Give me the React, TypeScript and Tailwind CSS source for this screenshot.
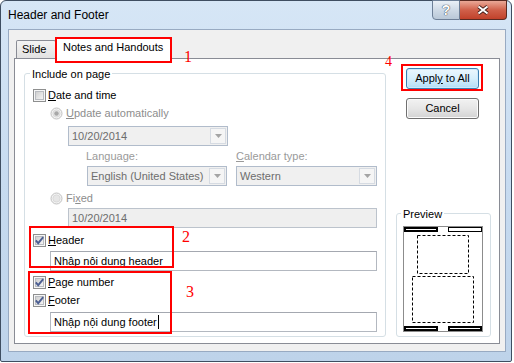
import React from 'react';

// Win7-style check box, 13x13
const CheckBox = ({ checked }: { checked?: boolean }) => (
  <svg width="13" height="13" viewBox="0 0 13 13" className="shrink-0">
    <defs>
      <linearGradient id="cbfill" x1="0" y1="0" x2="1" y2="1">
        <stop offset="0" stopColor="#cdcdcd" />
        <stop offset="1" stopColor="#f7f7f7" />
      </linearGradient>
    </defs>
    <rect x="0.5" y="0.5" width="12" height="12" fill="#f6f6f6" stroke="#8e8f8f" />
    <rect x="2.5" y="2.5" width="8" height="8" fill="url(#cbfill)" stroke="#b9bcc1" />
    {checked && (
      <path d="M2.8 6.4 L5.2 9.2 L10.2 3.2" fill="none" stroke="#4c5f93" strokeWidth="1.9" />
    )}
  </svg>
);

const Radio = ({ selected }: { selected?: boolean }) => (
  <svg width="13" height="13" viewBox="0 0 13 13" className="shrink-0">
    <circle cx="6.5" cy="6.5" r="5.5" fill="#f3f3f3" stroke="#c2c2c2" />
    <circle cx="6.5" cy="6.5" r="3.6" fill="#e6e6e6" stroke="#d6d6d6" strokeWidth="0.8" />
    {selected && <circle cx="6.5" cy="6.5" r="2.2" fill="#a8a8a8" />}
  </svg>
);

const Key = ({ children }: { children: React.ReactNode }) => (
  <span className="underline decoration-1 underline-offset-[1px]">{children}</span>
);

const Combo = ({ value, className = '' }: { value: string; className?: string }) => (
  <div className={`flex h-[20px] border border-[#b1bccb] bg-[#f0f0f0] ${className}`}>
    <span className="flex flex-1 items-center pl-[3px] text-[#6d6d6d]">{value}</span>
    <span className="m-px flex w-[16px] items-center justify-center border border-[#d6dbe2] bg-[#f5f5f5]">
      <svg width="7" height="4" viewBox="0 0 7 4">
        <path d="M0 0h7L3.5 4z" fill="#a4a4a4" />
      </svg>
    </span>
  </div>
);

const PreviewPage = () => (
  <svg width="80" height="106" viewBox="0 0 80 106">
    <rect x="0.5" y="0.5" width="79" height="105" fill="#fff" stroke="#8c8c8c" />
    <rect x="2" y="2" width="32" height="3" fill="#fff" stroke="#000" strokeWidth="2" />
    <rect x="45.5" y="1.5" width="33" height="4" fill="#fff" stroke="#000" />
    <rect x="14.5" y="9.5" width="51" height="38" fill="none" stroke="#000" strokeDasharray="3 2" />
    <rect x="9.5" y="50.5" width="61" height="46" fill="none" stroke="#000" strokeDasharray="3 2" />
    <rect x="2" y="101" width="32" height="3" fill="#fff" stroke="#000" strokeWidth="2" />
    <rect x="46" y="101" width="32" height="3" fill="#fff" stroke="#000" strokeWidth="2" />
  </svg>
);

export default function App() {
  return (
    <div className="relative h-[363px] w-[514px] overflow-hidden bg-white font-['Liberation_Sans',Arial,sans-serif] text-[11px] leading-[13px] text-black">
      {/* window */}
      <div className="flex h-[362px] w-[512px] flex-col rounded-t-[6px] rounded-b-[2px] border border-[#3f4e61] bg-gradient-to-b from-[#d6e6f6] via-[#c7dbf0] to-[#bed3ea]">
        {/* title bar */}
        <div className="flex h-[28px] shrink-0 items-start">
          <span className="pl-[7px] pt-[7px] text-[12px] leading-[14px]">Header and Footer</span>
          <div className="-mt-px mr-[4px] ml-auto flex">
            <div className="flex h-[20px] w-[28px] items-center justify-center rounded-bl-[4px] border border-[#6d7f97] bg-gradient-to-b from-[#eaf0f7] via-[#cfdae6] to-[#b9c8d8] text-[14px] font-bold text-white [text-shadow:0_0_1px_#2d3440,0_0_1px_#2d3440]">
              ?
            </div>
            <div className="flex h-[20px] w-[47px] items-center justify-center rounded-br-[4px] border border-l-0 border-[#5a2a22] bg-gradient-to-b from-[#e9a897] via-[#d0604a] to-[#c1412a]">
              <svg width="12" height="10" viewBox="0 0 12 10">
                <path d="M1.5 1.5L10.5 8.5M10.5 1.5L1.5 8.5" stroke="#3b1a16" strokeWidth="3.6" />
                <path d="M1.5 1.5L10.5 8.5M10.5 1.5L1.5 8.5" stroke="#fff" strokeWidth="2" />
              </svg>
            </div>
          </div>
        </div>

        {/* client area */}
        <div className="mb-[9px] ml-[7px] mr-[5px] flex flex-1 flex-col border border-[#98aac2] bg-[#f0f0f0] px-[5px] pt-[8px] pb-[7px]">
          {/* tabs */}
          <div className="flex h-[20px] shrink-0 items-end pl-[2px]">
            <div className="h-[18px] w-[40px] rounded-t-[2px] border border-b-0 border-[#898c95] bg-gradient-to-b from-[#f4f4f4] to-[#e2e2e2] pl-[5px] pt-[2px]">
              Slide
            </div>
            <div className="relative z-10 -mb-px -ml-px h-[21px] w-[116px] rounded-t-[2px] border border-b-0 border-[#898c95] bg-white pl-[7px] pt-[2px]">
              Notes and Handouts
            </div>
          </div>

          {/* tab page */}
          <div className="flex flex-1 border border-[#898c95] bg-white pl-[9px] pt-[9px]">
            {/* Include on page */}
            <div className="relative mt-[5px] flex h-[264px] w-[362px] flex-col rounded-[3px] border border-[#d5dfe5] pl-[8px]">
              <span className="absolute -top-[6px] left-[5px] bg-white px-[2px]">Include on page</span>

              <div className="mt-[12px] flex h-[18px] items-center">
                <CheckBox />
                <span className="ml-[2px]"><Key>D</Key>ate and time</span>
              </div>
              <div className="ml-[17px] flex h-[18px] items-center text-[#8d8d8d]">
                <Radio selected />
                <span className="ml-[3px]"><Key>U</Key>pdate automatically</span>
              </div>
              <Combo value="10/20/2014" className="ml-[35px] mt-[4px] w-[160px]" />
              <div className="flex h-[20px] items-center text-[#9a9a9a]">
                <span className="ml-[53px] w-[150px]">Language:</span>
                <span><Key>C</Key>alendar type:</span>
              </div>
              <div className="flex">
                <Combo value="English (United States)" className="ml-[54px] w-[140px]" />
                <Combo value="Western" className="ml-[9px] w-[141px]" />
              </div>
              <div className="ml-[17px] mt-[3px] flex h-[18px] items-center text-[#8d8d8d]">
                <Radio />
                <span className="ml-[3px]">Fi<Key>x</Key>ed</span>
              </div>
              <div className="ml-[35px] mt-[1px] flex h-[20px] w-[309px] items-center border border-[#bcc3cc] bg-[#efefef] pl-[3px] text-[#6d6d6d]">
                10/20/2014
              </div>

              <div className="mt-[3px] flex h-[18px] items-center">
                <CheckBox checked />
                <span className="ml-[2px]"><Key>H</Key>eader</span>
              </div>
              <div className="ml-[17px] mt-[2px] flex h-[20px] w-[327px] items-center border border-[#b3b8c0] border-t-[#a4a8b0] bg-white pl-[3px]">
                Nhập nội dung header
              </div>
              <div className="mt-[2px] flex h-[18px] items-center">
                <CheckBox checked />
                <span className="ml-[2px]"><Key>P</Key>age number</span>
              </div>
              <div className="flex h-[18px] items-center">
                <CheckBox checked />
                <span className="ml-[2px]"><Key>F</Key>ooter</span>
              </div>
              <div className="ml-[17px] mt-[3px] flex h-[20px] w-[327px] items-center border border-[#b3b8c0] border-t-[#a4a8b0] bg-white pl-[3px]">
                Nhập nội dung footer
                <span className="ml-px h-[14px] w-px bg-black" />
              </div>
            </div>

            {/* buttons + preview */}
            <div className="ml-[10px] flex w-[95px] flex-col">
              <button className="ml-[10px] h-[21px] w-[73px] rounded-[3px] border border-[#3c7fb1] bg-gradient-to-b from-[#ecf7fd] via-[#d6effc] to-[#b2def7] shadow-[inset_0_0_0_1px_#cdeafc]">
                Appl<Key>y</Key> to All
              </button>
              <button className="ml-[10px] mt-[9px] h-[21px] w-[73px] rounded-[3px] border border-[#707070] bg-gradient-to-b from-[#f2f2f2] via-[#e6e6e6] to-[#d3d3d3] shadow-[inset_0_0_0_1px_#fbfbfb]">
                Cancel
              </button>
              <div className="relative mt-[94px] h-[124px] w-[95px] rounded-[3px] border border-[#d5dfe5] pl-[6px] pt-[12px]">
                <span className="absolute -top-[6px] left-[4px] bg-white px-[2px]">Preview</span>
                <PreviewPage />
              </div>
            </div>
          </div>
        </div>
      </div>

      {/* red annotations */}
      <div className="absolute left-[55px] top-[37px] z-20 h-[26px] w-[117px] border-2 border-[#f00]" />
      <span className="absolute left-[184px] top-[49px] font-['Liberation_Serif',serif] text-[16px] leading-[16px] text-[#f00]">1</span>
      <div className="absolute left-[29px] top-[226px] h-[42px] w-[145px] border-2 border-[#f00]" />
      <span className="absolute left-[182px] top-[229px] font-['Liberation_Serif',serif] text-[16px] leading-[16px] text-[#f00]">2</span>
      <div className="absolute left-[28px] top-[271px] h-[63px] w-[144px] border-2 border-[#f00]" />
      <span className="absolute left-[186px] top-[284px] font-['Liberation_Serif',serif] text-[16px] leading-[16px] text-[#f00]">3</span>
      <div className="absolute left-[401px] top-[64px] h-[27px] w-[82px] border-2 border-[#f00]" />
      <span className="absolute left-[385px] top-[55px] font-['Liberation_Serif',serif] text-[14px] leading-[14px] text-[#f00]">4</span>
    </div>
  );
}
